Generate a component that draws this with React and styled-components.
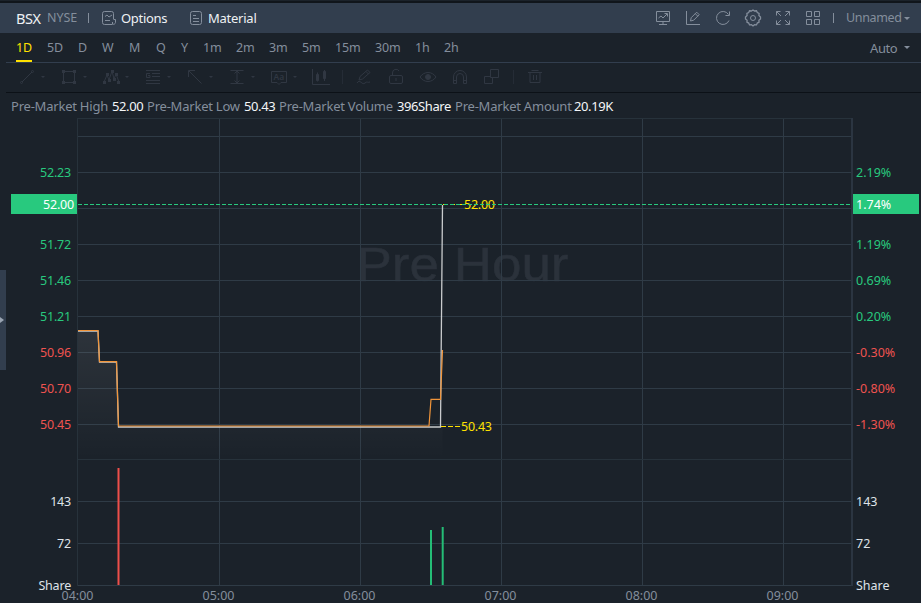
import React from "react";
import styled, { createGlobalStyle } from "styled-components";

const Global = createGlobalStyle`
  * { box-sizing: border-box; }
  body { margin: 0; background: #1b222a; }
`;

const Screen = styled.main`
  position: relative;
  display: flex;
  flex-direction: column;
  width: 921px;
  height: 603px;
  overflow: hidden;
  background: #1b222a;
  border-top: 1px solid #1b222a;
  color: #848e9c;
  font: 13px/18px "Noto Sans", "Open Sans", sans-serif;
  white-space: nowrap;
`;

const Header = styled.header`
  display: flex;
  align-items: center;
  flex: none;
  height: 32px;
  padding: 0 11px 0 16px;
  border-top: 2px solid #10151b;
  background: #323e4e;
`;

const Label = styled.span`
  flex: none;
  width: ${(p) => p.$w}px;
  margin-left: ${(p) => p.$gap || 0}px;
  color: ${(p) => p.$color || "#848e9c"};
  font-size: ${(p) => p.$size || 13}px;
  letter-spacing: ${(p) => p.$track || 0}px;
`;

const Divider = styled.span`
  flex: none;
  width: 1px;
  height: ${(p) => p.$h || 10}px;
  margin: 0 ${(p) => p.$right}px 0 ${(p) => p.$left}px;
  background: ${(p) => p.$color || "#848e9c"};
`;

const Icon = styled.svg`
  flex: none;
  display: block;
  width: 18px;
  height: 18px;
  fill: none;
  stroke: currentColor;
  stroke-width: 1;
`;

const Actions = styled.div`
  display: flex;
  align-items: center;
  gap: 12px;
  margin-left: auto;
`;

const Caret = styled.span`
  flex: none;
  width: 0;
  height: 0;
  margin-left: ${(p) => p.$gap || 0}px;
  border: solid transparent;
  border-width: ${(p) => p.$s || 3}px ${(p) => p.$s || 3}px 0;
  border-top-color: currentColor;
`;

const Periods = styled.nav`
  display: flex;
  flex: none;
  height: 30px;
  margin-left: 6px;
  padding: 0 11px 0 10px;
  gap: 15px;
  border-bottom: 1px solid #323e4e;
`;

const Period = styled.span`
  flex: none;
  width: ${(p) => p.$w}px;
  height: 29px;
  padding-top: 6px;
  font-size: 12.5px;
  letter-spacing: -0.1px;
  color: ${(p) => (p.$active ? "#ffe100" : "inherit")};
  border-bottom: 2px solid ${(p) => (p.$active ? "#ffe100" : "transparent")};
`;

const Scale = styled.div`
  display: flex;
  align-items: center;
  margin-left: auto;
`;

const Tools = styled.div`
  display: flex;
  align-items: center;
  flex: none;
  height: 30px;
  margin-left: 6px;
  padding: 0 0 1px 12px;
  border-bottom: 1px solid #0c1117;
  color: #303742;
`;

const Tool = styled.span`
  display: flex;
  align-items: center;
  flex: none;
  width: ${(p) => p.$w}px;
`;

const Summary = styled.div`
  display: flex;
  flex: none;
  height: 25px;
  padding: 4px 0 0 11px;
`;

const Chart = styled.section`
  display: grid;
  grid-template-columns: 77px 776px 68px;
  flex: none;
  height: 485px;
`;

const Axis = styled.div`
  display: flex;
  flex-direction: column;
  padding-top: 36px;
  font-size: 12.5px;
  letter-spacing: ${(p) => (p.$right ? 0 : -0.2)}px;
  text-align: ${(p) => (p.$right ? "left" : "right")};
`;

const tones = { up: "#28c97e", down: "#ef5350", plain: "#dfe3e8" };

const Tick = styled.div`
  flex: none;
  height: ${(p) => p.$h || 36}px;
  padding: ${(p) => (p.$right ? "1px 0 0 3px" : "1px 6px 0 0")};
  line-height: ${(p) => (p.$h || 36)}px;
  color: ${(p) => tones[p.$tone]};
`;

const TagSlot = styled.div`
  flex: none;
  height: 36px;
  padding: 4px ${(p) => (p.$right ? "2px 0 0" : "0 0 11px")};
`;

const Tag = styled.div`
  height: 20px;
  padding: 0 3px;
  line-height: 21px;
  color: #fff;
  background: #28c97e;
`;

const VolumeTicks = styled.div`
  margin-top: 38px;
`;

const Plot = styled.div`
  display: flex;
  flex-direction: column;
`;

const Canvas = styled.svg`
  display: block;
  width: 776px;
  height: 468px;
  flex: none;
  overflow: visible;
`;

const Times = styled.div`
  display: grid;
  grid-template-columns: repeat(6, 141px);
  margin-left: -70px;
  padding-top: 2px;
  line-height: 15px;
  font-size: 12.5px;
  text-align: center;
`;

const Drawer = styled.button`
  position: absolute;
  left: 0;
  top: 269px;
  width: 6px;
  height: 100px;
  padding: 0;
  border: 0;
  background: #323e4e;
  color: #9aa4b2;
  display: flex;
  align-items: center;
`;

const icons = {
  options: <><path d="M12.5 10V4.5a2 2 0 0 0-2-2h-7a2 2 0 0 0-2 2v9a2 2 0 0 0 2 2h8" /><path d="M12.5 10.5h2v3a2 2 0 0 1-3 1.500v-2M4 7.500l2-1.500 2 2 3-2M4 11.500h5" /></>,
  material: <><rect x="1.500" y="2.500" width="11" height="13" rx="2" /><path d="M4 6.500h3M4 9.500h6M4 12.500h6" /></>,
  monitor: <path d="M2.500 2.500h13v10h-13zM9 12.500v3M5 15.500h8M4.500 9l2.500-2 2 2 4-4M10.500 4.500h3v3" />,
  draw: <path d="M2.500 2v13.500H16M6.500 12l.7-3.300 5.500-5.500 2.500 2.500-5.500 5.500zM11.300 4.700l2.500 2.500" />,
  reload: <path d="M15 11.500A6.500 6.500 0 1 1 14.500 5.500M15.500 2.500v4h-4" />,
  gear: <><path strokeWidth="1.300" d="M7.500 2 9 1l1.500 1 2-.2.8 1.800 1.800.9-.2 2L16.500 8v2l-1.600 1.200.2 2-1.800.9-.8 1.800-2-.2L9 17l-1.500-1.300-2 .2-.8-1.800-1.800-.9.2-2L1.500 10V8l1.600-1.500-.2-2 1.800-.9.8-1.800z" /><circle cx="9" cy="9" r="2.500" /></>,
  expand: <path d="M2.500 6.500v-4h4M2.500 2.500l4.500 4.500M11.500 2.500h4v4M15.500 2.500 11 7M2.500 11.500v4h4M2.500 15.500 7 11M11.500 15.500h4v-4M15.500 15.500 11 11" />,
  grid: <path d="M2.500 2.500h5v5h-5zM10.500 2.500h5v5h-5zM2.500 10.500h5v5h-5zM10.500 10.500h5v5h-5z" />,
  line: <><path d="M4 14 14 4" /><circle cx="3.500" cy="14.500" r="1" /><circle cx="14.500" cy="3.500" r="1" /></>,
  rect: <><path d="M3.500 3.500h11v11h-11z" /><path d="M2 2h3v3H2zM13 2h3v3h-3zM2 13h3v3H2zM13 13h3v3h-3z" fill="currentColor" stroke="none" /></>,
  wave: <><path d="m2 14 3-7 2 5 3-9 2 8 2-5 3 8" /><path d="M1 13h3v3H1zM4 5h3v3H4zM6 11h3v3H6zM9 2h3v3H9zM11 10h3v3h-3zM13 5h3v3h-3zM15 13h3v3h-3z" fill="currentColor" stroke="none" /></>,
  lines: <path d="M2 2.500h14M8 5.500h8M8 8.500h8M2 12.500h14M2 15.500h14M6 5.500H2.500v4H6v-2H4" />,
  arrow: <path d="M15.500 15.500 3 3M2.500 9V2.500H9" />,
  span: <path d="M2.500 2.500h13M2.500 15.500h13M9 3v12M6.500 5.500 9 3l2.500 2.500M6.500 12.500 9 15l2.500-2.500" />,
  note: <><path d="M1.500 3.500h15v11H11l-2 2-2-2H1.500z" /><text x="3.500" y="12" fontSize="8.500" fontWeight="600" fill="currentColor" stroke="none">Aa</text></>,
  candles: <><path d="M.500 1v15.500H18M5.500 4.500v9M12.500 2v11" /><path d="M4.500 6.500h2v6h-2zM11.500 3.500h2v7h-2z" fill="currentColor" /></>,
  pen: <path d="m4 12 1-3.500 7.500-6.500 2.500 2.500L7.500 11zM11 3.500 13.500 6M2 15c3-5 5 3 8 0 2-2 3 0 5-1" />,
  lock: <><rect x="2.500" y="7.500" width="13" height="8" rx="1.500" /><path d="M5.500 7V5a3.500 3.500 0 0 1 6.500-2M9 10v3" /></>,
  eye: <><path d="M1 9c4-6 12-6 16 0-4 6-12 6-16 0z" /><circle cx="9" cy="9" r="2.500" fill="currentColor" /></>,
  magnet: <path d="M2.500 15.500V9a6.500 6.500 0 0 1 13 0v6.500h-3V9a3.500 3.500 0 0 0-7 0v6.500zM2.500 12.500h3M12.500 12.500h3" />,
  layers: <path d="M7.500 1.500h8v8h-8zM7.500 8.500h-6v7h8v-6" />,
  trash: <path d="M2 4.500h14M5.500 2.500h7M4 5v9.500h10V5M7.500 7v5M10.500 7v5" />,
};

const Glyph = ({ name }) => <Icon viewBox="0 0 18 18">{icons[name]}</Icon>;

const periods = [["1D", 16], ["5D", 16], ["D", 9], ["W", 12], ["M", 12], ["Q", 10], ["Y", 7], ["1m", 18], ["2m", 18], ["3m", 18], ["5m", 18], ["15m", 25], ["30m", 25], ["1h", 14], ["2h", 14]];

const summary = [
  ["Pre-Market High", 101, "52.00", 35],
  ["Pre-Market Low", 97, "50.43", 35],
  ["Pre-Market Volume", 118, "396Share", 58],
  ["Pre-Market Amount", 119, "20.19K", 42],
];

const left = [["52.23", "up"], null, ["51.72", "up"], ["51.46", "up"], ["51.21", "up"], ["50.96", "down"], ["50.70", "down"], ["50.45", "down"]];
const right = [["2.19%", "up"], null, ["1.19%", "up"], ["0.69%", "up"], ["0.20%", "up"], ["-0.30%", "down"], ["-0.80%", "down"], ["-1.30%", "down"]];

const PriceAxis = ({ ticks, tag, side }) => {
  const r = side === "right";
  return (
    <Axis $right={r}>
      {ticks.map((t) => t
        ? <Tick key={t[0]} $tone={t[1]} $right={r}>{t[0]}</Tick>
        : <TagSlot key="tag" $right={r}><Tag>{tag}</Tag></TagSlot>)}
      <VolumeTicks>
        {["143", "72", "Share"].map((t) => <Tick key={t} $h={42} $tone="plain" $right={r}>{t}</Tick>)}
      </VolumeTicks>
    </Axis>
  );
};

const pricePath = "M78 331H98L99.500 362H116.500L118.500 427H440.500L442.500 205";
const areaPath = "M78 331H98L99.500 362H116.500L118.500 427H442.500V459H78z";

export default function App() {
  return (
    <Screen>
      <Global />
      <Header>
        <Label $w={27} $size={14.5} $track={-0.5} $color="#eef1f4">BSX</Label>
        <Label $w={30} $gap={4} $size={12.5} $track={-0.1}>NYSE</Label>
        <Divider $left={11} $right={12} />
        <Glyph name="options" />
        <Label $w={46} $gap={2} $track={-0.3} $color="#eef1f4">Options</Label>
        <Divider $left={21} $right={0} $color="transparent" />
        <Glyph name="material" />
        <Label $w={48} $gap={1} $track={-0.25} $color="#eef1f4">Material</Label>
        <Actions>
          {["monitor", "draw", "reload", "gear", "expand", "grid"].map((n) => <Glyph key={n} name={n} />)}
        </Actions>
        <Divider $left={11} $right={12} />
        <Label $w={56} $size={12.5} $track={-0.35}>Unnamed</Label>
        <Caret $gap={2} />
      </Header>

      <Periods>
        {periods.map(([t, w], i) => <Period key={t} $w={w} $active={i === 0}>{t}</Period>)}
        <Scale><Label $w={27} $track={-0.4}>Auto</Label><Caret $gap={7} /></Scale>
      </Periods>

      <Tools>
        {["line", "rect", "wave", "lines", "arrow", "span", "note"].map((n) => (
          <Tool key={n} $w={42}><Glyph name={n} /><Caret $gap={5} $s={2} /></Tool>
        ))}
        <Tool $w={30}><Glyph name="candles" /></Tool>
        <Divider $left={0} $right={12} $h={14} $color="#252c36" />
        {["pen", "lock", "eye", "magnet", "layers"].map((n) => <Tool key={n} $w={32}><Glyph name={n} /></Tool>)}
        <Divider $left={-2} $right={12} $h={14} $color="#252c36" />
        <Glyph name="trash" />
      </Tools>

      <Summary>
        {summary.map(([name, nw, value, vw]) => (
          <React.Fragment key={name}>
            <Label $w={nw} $track={-0.22}>{name}</Label>
            <Label $w={vw} $track={-0.4} $color="#f4f6f8">{value}</Label>
          </React.Fragment>
        ))}
      </Summary>

      <Chart>
        <PriceAxis side="left" ticks={left} tag="52.00" />
        <Plot>
          <Canvas viewBox="77 118 776 468">
            <defs>
              <linearGradient id="fade" gradientUnits="userSpaceOnUse" x1="0" y1="331" x2="0" y2="459">
                <stop offset="0" stopColor="#fff" stopOpacity="0.08" />
                <stop offset="1" stopColor="#fff" stopOpacity="0" />
              </linearGradient>
            </defs>
            <text x="356.500" y="281" fill="#2b323b" stroke="#2b323b" strokeWidth="0.500" fontFamily="Liberation Sans, sans-serif" fontSize="48.500" textLength="212" lengthAdjust="spacingAndGlyphs">Pre Hour</text>
            <g stroke="#2f3b46" shapeRendering="crispEdges">
              {[136, 172, 208, 244, 280, 316, 352, 388, 424, 501, 543, 585].map((y) => <path key={y} d={`M77 ${y + 0.5}H852`} />)}
              {[219, 360, 501, 642, 783].map((x) => <path key={x} d={`M${x + 0.5} 118V585`} />)}
              <path stroke="#27323b" d="M77 118.500H852M77 459.500H852M77.500 118V586" />
              <path stroke="#2b3541" strokeWidth="2" d="M852 118V586" />
            </g>
            <path d={areaPath} fill="url(#fade)" />
            <path d={pricePath} fill="none" stroke="#c9cbcd" strokeWidth="1.300" />
            <path d="M78 330.500H98L99.500 361.700H116.500L118.500 426H429L431 399.300H440.500L442.500 350" fill="none" stroke="#f1953a" strokeWidth="1.200" />
            <g fill="#ffe100" fontFamily="Noto Sans, sans-serif" fontSize="12.500">
              <text x="464" y="209" textLength="31">52.00</text>
              <text x="461" y="431" textLength="31">50.43</text>
            </g>
            <g fill="none" shapeRendering="crispEdges">
              <path d="M443 204.500H464M441 426.500H462" stroke="#ffe100" strokeDasharray="5 2" />
              <path d="M78 204.500H852" stroke="#28c97e" strokeDasharray="4 2" />
            </g>
            <path d="M118.500 468V585" stroke="#ef4f4a" strokeWidth="2" />
            <path d="M431 530V585M442.700 527V585" stroke="#24bd76" strokeWidth="2" />
          </Canvas>
          <Times>
            {["04:00", "05:00", "06:00", "07:00", "08:00", "09:00"].map((t) => <span key={t}>{t}</span>)}
          </Times>
        </Plot>
        <PriceAxis side="right" ticks={right} tag="1.74%" />
      </Chart>

      <Drawer aria-label="Open panel">
        <svg width="4" height="8" viewBox="0 0 4 8"><path d="M0 1 4 4 0 7z" fill="currentColor" /></svg>
      </Drawer>
    </Screen>
  );
}
